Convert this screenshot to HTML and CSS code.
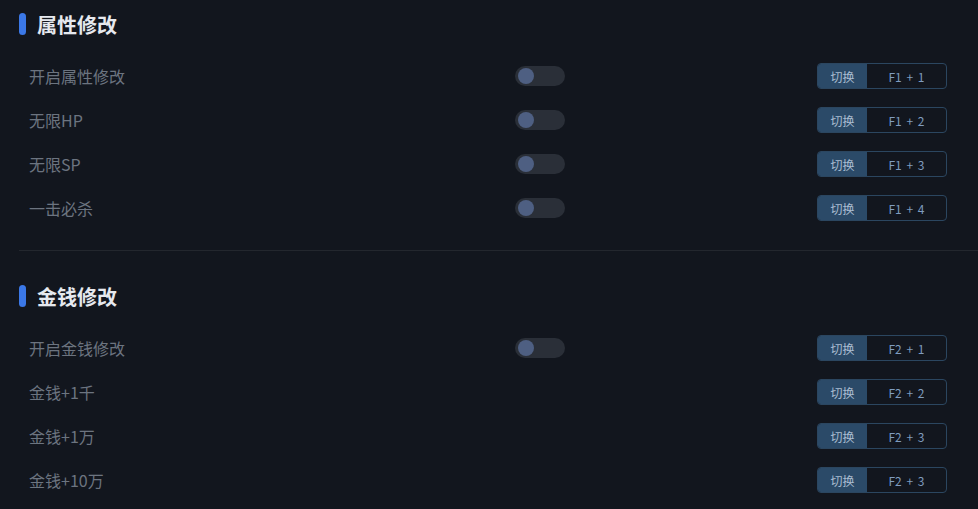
FILE: index.html
```html
<!DOCTYPE html>
<html>
<head>
	<meta charset="utf-8">
	<title>修改器</title>
	<link rel="stylesheet" href="styles.css">
</head>
<body>
	<div class="painel">
		<div class="secao">
			<h2 class="titulo"><span class="marca"></span>属性修改</h2>
			<div class="linha">
				<span class="rotulo">开启属性修改</span>
				<span class="chave"><span class="bolinha"></span></span>
				<span class="atalho"><span class="acao">切换</span><span class="tecla">F1 + 1</span></span>
			</div>
			<div class="linha">
				<span class="rotulo">无限HP</span>
				<span class="chave"><span class="bolinha"></span></span>
				<span class="atalho"><span class="acao">切换</span><span class="tecla">F1 + 2</span></span>
			</div>
			<div class="linha">
				<span class="rotulo">无限SP</span>
				<span class="chave"><span class="bolinha"></span></span>
				<span class="atalho"><span class="acao">切换</span><span class="tecla">F1 + 3</span></span>
			</div>
			<div class="linha">
				<span class="rotulo">一击必杀</span>
				<span class="chave"><span class="bolinha"></span></span>
				<span class="atalho"><span class="acao">切换</span><span class="tecla">F1 + 4</span></span>
			</div>
		</div>

		<div class="divisor"></div>

		<div class="secao">
			<h2 class="titulo"><span class="marca"></span>金钱修改</h2>
			<div class="linha">
				<span class="rotulo">开启金钱修改</span>
				<span class="chave"><span class="bolinha"></span></span>
				<span class="atalho"><span class="acao">切换</span><span class="tecla">F2 + 1</span></span>
			</div>
			<div class="linha">
				<span class="rotulo">金钱+1千</span>
				<span></span>
				<span class="atalho"><span class="acao">切换</span><span class="tecla">F2 + 2</span></span>
			</div>
			<div class="linha">
				<span class="rotulo">金钱+1万</span>
				<span></span>
				<span class="atalho"><span class="acao">切换</span><span class="tecla">F2 + 3</span></span>
			</div>
			<div class="linha">
				<span class="rotulo">金钱+10万</span>
				<span></span>
				<span class="atalho"><span class="acao">切换</span><span class="tecla">F2 + 3</span></span>
			</div>
		</div>
	</div>
</body>
</html>
```

FILE: styles.css
```css
* {
	font-family: "Noto Sans CJK SC", "Noto Sans", sans-serif;
	box-sizing: border-box;
}

body {
	margin: 0;
	background-color: #12161e;
}

.painel {
	padding: 13px 0 0 19px;
}

.titulo {
	display: flex;
	align-items: center;
	margin: 0 0 19px 0;
	height: 22px;
	font-size: 20px;
	font-weight: 700;
	color: #e6e9ef;
}

.marca {
	width: 7px;
	height: 22px;
	margin-right: 11px;
	border-radius: 4px;
	background-color: #3b78e7;
}

.linha {
	display: grid;
	grid-template-columns: 486px 50px 1fr 130px;
	align-items: center;
	height: 44px;
	padding: 0 31px 0 10px;
}

.rotulo {
	font-size: 16px;
	color: #6c7480;
}

.chave {
	position: relative;
	width: 50px;
	height: 20px;
	border-radius: 10px;
	background-color: #2a2f38;
}

.bolinha {
	position: absolute;
	top: 2px;
	left: 3px;
	width: 16px;
	height: 16px;
	border-radius: 50%;
	background-color: #4e5f82;
}

.atalho {
	grid-column: 4;
	display: flex;
	height: 26px;
	border: 1px solid #2b4660;
	border-radius: 4px;
	overflow: hidden;
	font-size: 12px;
}

.acao {
	width: 49px;
	display: flex;
	align-items: center;
	justify-content: center;
	background-color: #2b4a68;
	color: #aabdd2;
}

.tecla {
	flex-grow: 1;
	display: flex;
	align-items: center;
	justify-content: center;
	color: #7f9cbf;
	word-spacing: 2px;
}

.divisor {
	height: 1px;
	margin: 20px 0 34px 0;
	background-color: #23272e;
}
```
